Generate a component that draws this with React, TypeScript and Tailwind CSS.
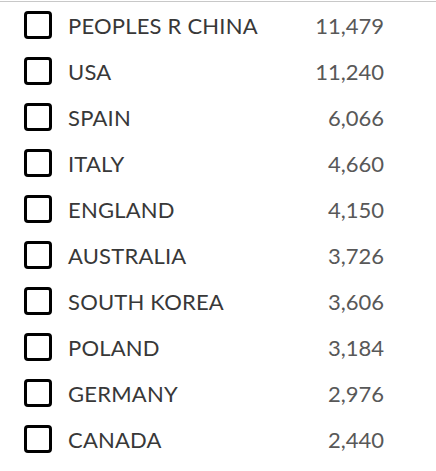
const rows: [string, string][] = [
  ["PEOPLES R CHINA", "11,479"],
  ["USA", "11,240"],
  ["SPAIN", "6,066"],
  ["ITALY", "4,660"],
  ["ENGLAND", "4,150"],
  ["AUSTRALIA", "3,726"],
  ["SOUTH KOREA", "3,606"],
  ["POLAND", "3,184"],
  ["GERMANY", "2,976"],
  ["CANADA", "2,440"],
];

export default function App() {
  return (
    <div className="w-[436px] h-[471px] bg-white overflow-hidden" style={{ fontFamily: "Lato, 'Liberation Sans', sans-serif" }}>
      <div className="mt-px border-t border-[#c8c8c8]" />
      <ul className="pl-6 w-[384px]">
        {rows.map(([name, n]) => (
          <li key={name} className="h-[46px] flex items-center">
            <span className="w-[28px] h-[28px] border-[3px] border-black rounded-[4px] shrink-0" />
            <span className="ml-4 text-[22px] tracking-[0.2px] text-[#383838] flex-1">{name}</span>
            <span className="text-[22px] text-[#585858]">{n}</span>
          </li>
        ))}
      </ul>
    </div>
  );
}
